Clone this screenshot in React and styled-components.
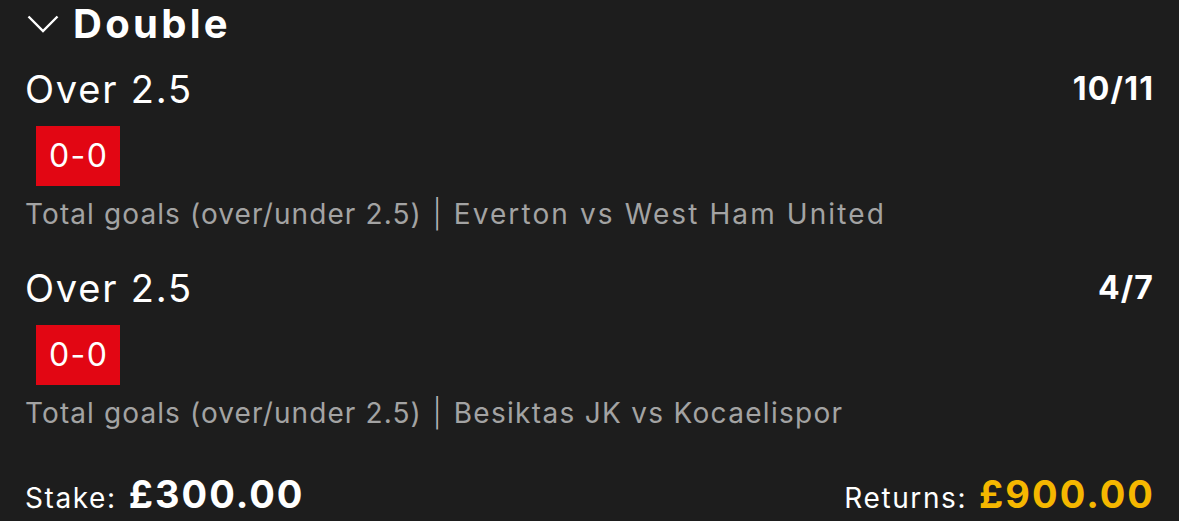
import React from 'react'
import styled, { createGlobalStyle } from 'styled-components'

const GlobalStyle = createGlobalStyle`
  html, body {
    margin: 0;
    padding: 0;
    background: #1d1d1d;
  }
  body {
    font-family: Inter, "Open Sans", sans-serif;
    color: #ffffff;
  }
`

const Slip = styled.div`
  width: 1179px;
  height: 521px;
  box-sizing: border-box;
  padding: 0 26px 0 25px;
  background: #1d1d1d;
  overflow: hidden;
`

const Header = styled.div`
  display: flex;
  align-items: center;
  gap: 14px;
  height: 48px;
  padding-left: 2px;
`

const Title = styled.h2`
  margin: 0;
  font-size: 40px;
  font-weight: 700;
  letter-spacing: 3.3px;
  line-height: 48px;
`

const Selection = styled.div`
  display: flex;
  flex-direction: column;
  align-items: flex-start;
  margin-top: ${p => p.$gap}px;
`

const TopRow = styled.div`
  display: flex;
  justify-content: space-between;
  align-items: center;
  align-self: stretch;
  height: 46px;
`

const Market = styled.span`
  font-size: 38px;
  font-weight: 400;
  letter-spacing: 1.8px;
  line-height: 46px;
`

const Odds = styled.span`
  font-size: 32px;
  font-weight: 700;
  letter-spacing: 1.2px;
  margin-right: -1.2px;
  line-height: 46px;
`

const Score = styled.div`
  margin: 14px 0 0 11px;
  height: 60px;
  padding: 0 12px 0 13px;
  display: flex;
  align-items: center;
  background: #e20613;
  font-size: 32px;
  letter-spacing: 1.4px;
  line-height: 60px;
`

const Details = styled.div`
  margin-top: 10px;
  display: flex;
  gap: 11px;
  color: #a3a3a3;
  font-size: 28px;
  letter-spacing: 1.1px;
  line-height: 36px;
`

const Match = styled.span`
  letter-spacing: ${p => p.$spacing}px;
`

const Divider = styled.span`
  font-weight: 300;
  color: #b5b5b5;
`

const Footer = styled.div`
  margin-top: 40px;
  display: flex;
  justify-content: space-between;
  align-items: baseline;
  height: 40px;
`

const Amount = styled.div`
  display: flex;
  align-items: baseline;
  gap: 12px;
`

const Label = styled.span`
  font-size: 28px;
  font-weight: 400;
  letter-spacing: 1.6px;
`

const Value = styled.span`
  font-size: 38px;
  font-weight: 700;
  letter-spacing: 2px;
  margin-right: ${p => (p.$last ? '-2px' : '0')};
  color: ${p => p.$color || '#ffffff'};
`

const Chevron = () => (
  <svg width="32" height="18" viewBox="0 0 32 18" fill="none">
    <path d="M1.5 1.5 L16 16 L30.5 1.5" stroke="#ffffff" strokeWidth="2.4" />
  </svg>
)

const legs = [
  { odds: '10/11', match: 'Everton vs West Ham United', spacing: 2.1, gap: 18 },
  { odds: '4/7', match: 'Besiktas JK vs Kocaelispor', spacing: 1.3, gap: 33 },
]

export default function App() {
  return (
    <>
      <GlobalStyle />
      <Slip>
        <Header>
          <Chevron />
          <Title>Double</Title>
        </Header>
        {legs.map(leg => (
          <Selection key={leg.odds} $gap={leg.gap}>
            <TopRow>
              <Market>Over 2.5</Market>
              <Odds>{leg.odds}</Odds>
            </TopRow>
            <Score>0-0</Score>
            <Details>
              <span>Total goals (over/under 2.5)</span>
              <Divider>|</Divider>
              <Match $spacing={leg.spacing}>{leg.match}</Match>
            </Details>
          </Selection>
        ))}
        <Footer>
          <Amount>
            <Label>Stake:</Label>
            <Value>£300.00</Value>
          </Amount>
          <Amount>
            <Label>Returns:</Label>
            <Value $color="#f5b700" $last>£900.00</Value>
          </Amount>
        </Footer>
      </Slip>
    </>
  )
}
